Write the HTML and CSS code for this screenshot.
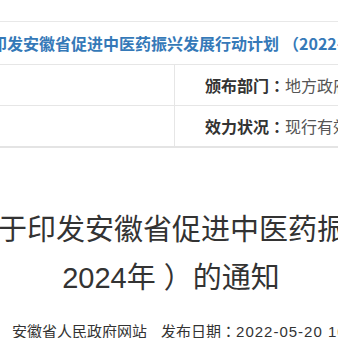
FILE: index.html
```html
<!DOCTYPE html>
<html>
  <head>
    <meta charset="utf-8" />
    <title>关于印发安徽省促进中医药振兴发展行动计划（2022-2024年）的通知</title>
    <link rel="stylesheet" href="styles.css">
  </head>
  <body>
    <div class="page">
      <div class="doc-head">
        <div class="doc-name">
          <span>关于印发安徽省促进中医药振兴发展行动计划<span class="punct">（</span>2022-2024年<span class="punct">）</span>的通知</span>
        </div>
        <div class="meta">
          <div class="meta-row">
            <div class="meta-cell"></div>
            <div class="meta-cell">
              <span class="label">颁布部门<span class="punct">：</span></span><span class="value">地方政府规章</span>
            </div>
          </div>
          <div class="meta-row">
            <div class="meta-cell"></div>
            <div class="meta-cell">
              <span class="label">效力状况<span class="punct">：</span></span><span class="value">现行有效</span>
            </div>
          </div>
        </div>
      </div>

      <h1 class="title">
        <span class="line first">关于印发安徽省促进中医药振兴发展行动计划</span>
        <span class="line second">2024年<span class="punct">）</span>的通知</span>
      </h1>

      <div class="source">
        <span>安徽省人民政府网站</span>
        <span class="pub">发布日期<span class="punct">：</span><span class="date">2022-05-20 10:00</span></span>
      </div>
    </div>
  </body>
</html>
```

FILE: styles.css
```css
body {
  font-family: "Liberation Sans", "Noto Sans CJK SC", sans-serif;
  background-color: #fff;
  margin: 0;
  padding: 0;
  overflow: hidden;
}
.page {
  width: 338px;
  height: 338px;
  overflow: hidden;
}
.punct {
  font-family: "Noto Sans CJK TC", sans-serif;
  line-height: 1;
}
.doc-head {
  padding-top: 21px;
}
.doc-name {
  height: 42px;
  border-top: 1px solid #e8e8e8;
  display: flex;
  align-items: center;
  white-space: nowrap;
  overflow: hidden;
}
.doc-name > span {
  margin-left: -41px;
  font-family: "Noto Sans CJK SC", sans-serif;
  font-size: 16px;
  font-weight: 700;
  color: #3579b8;
}
.doc-name .punct {
  margin-left: 4px;
}
.meta {
  border-bottom: 2px solid #e4e4e4;
}
.meta-row {
  box-sizing: border-box;
  display: grid;
  grid-template-columns: 175px 1fr;
  height: 41px;
  border-top: 1px solid #e6e6e6;
}
.meta-cell {
  display: flex;
  align-items: center;
  white-space: nowrap;
  overflow: hidden;
}
.meta-cell:first-child {
  border-right: 1px solid #e6e6e6;
}
.meta-cell:last-child {
  padding-left: 30px;
  font-size: 16px;
}
.label {
  font-weight: 700;
  color: #333;
}
.value {
  color: #555;
}
.title {
  margin: 58px 0 0;
  font-size: 29px;
  font-weight: 400;
  line-height: 48px;
  color: #333;
}
.title .line {
  display: block;
  height: 48px;
  white-space: nowrap;
}
.title .first {
  margin-left: -31px;
}
.title .second {
  text-align: center;
  padding-left: 4px;
}
.title .punct {
  margin-left: 8px;
}
.source {
  display: flex;
  gap: 14px;
  height: 20px;
  margin-top: 20px;
  padding-left: 12px;
  font-size: 15px;
  line-height: 20px;
  color: #333;
  white-space: nowrap;
}
.date {
  letter-spacing: 1px;
}
```
